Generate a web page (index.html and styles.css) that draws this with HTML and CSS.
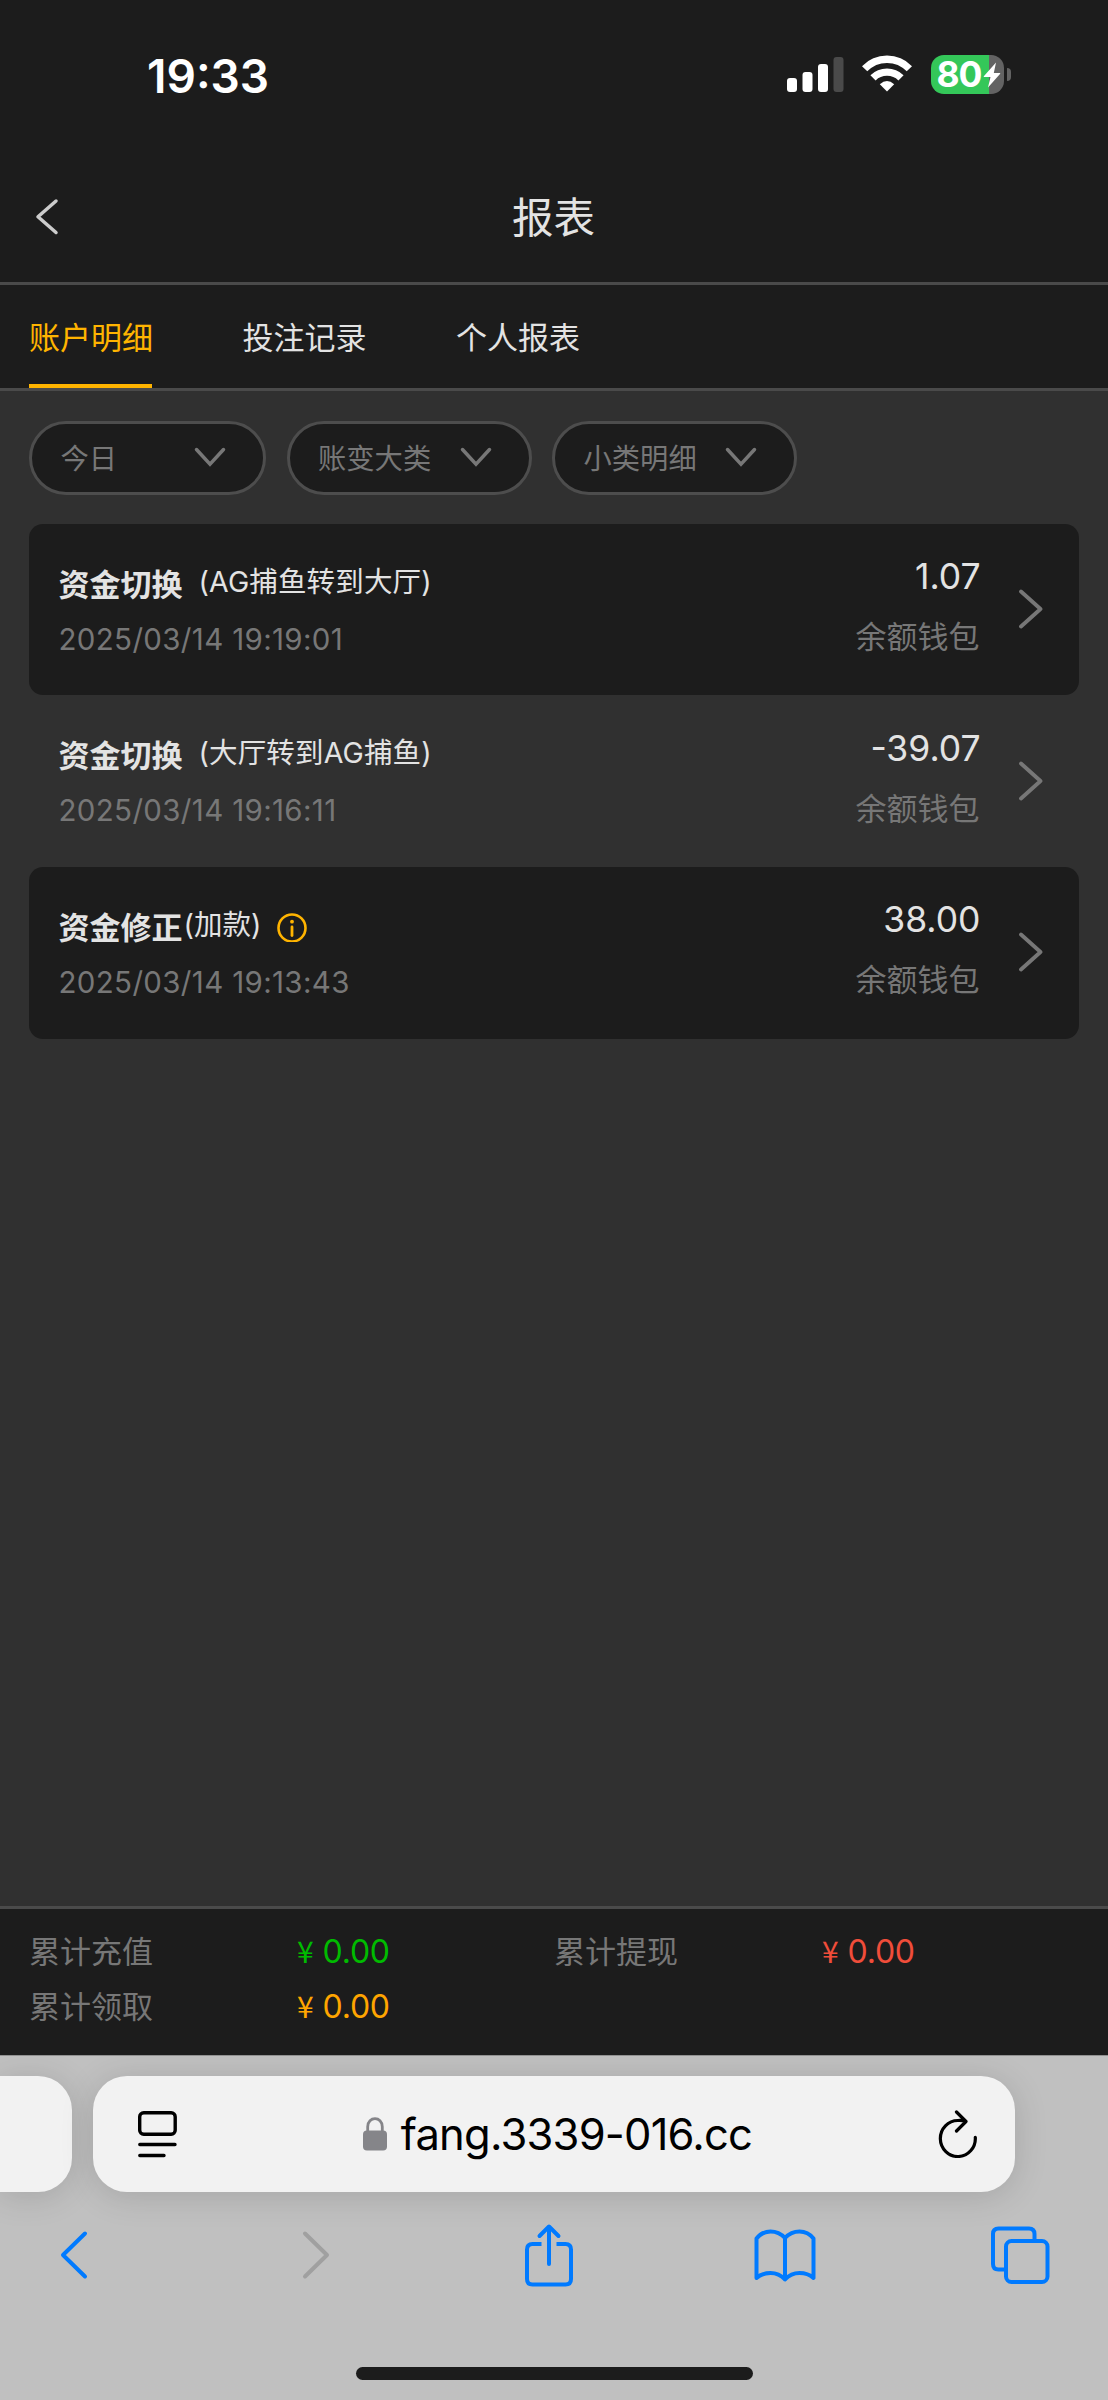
FILE: index.html
```html
<!DOCTYPE html>
<html lang="zh-CN">
<head>
<meta charset="utf-8">
<title>报表</title>
<link rel="stylesheet" href="styles.css">
</head>
<body>
<div class="status">
  <span class="time">19:33</span>
  <div class="status-icons">
    <svg class="signal" width="57" height="36" viewBox="0 0 57 36" fill="#fff"><rect x="0" y="22" width="10" height="14" rx="3"/><rect x="15.5" y="16" width="10" height="20" rx="3"/><rect x="31" y="8" width="10" height="28" rx="3"/><rect x="46.500" y="1" width="10" height="35" rx="3" fill="#4a4a4a"/></svg>
    <svg class="wifi" width="50" height="37" viewBox="0 0 50 37"><g fill="none" stroke="#fff" stroke-width="7.400"><path d="M2.600 13.800A31 31 0 0 1 47.400 13.800"/><path d="M11 22.800A20 20 0 0 1 39 22.800"/></g><path d="M25 36.500L17.800 29.300Q25 22.600 32.200 29.300Z" fill="#fff"/></svg>
    <div class="battery"><span>80</span><svg width="18" height="26" viewBox="0 0 18 26"><path d="M13 .5L.8 14.200Q.3 15 1.200 15H7.500L5 25.500L17.200 11.800Q17.600 11 16.700 11H10.800Z" fill="#fff"/></svg></div>
    <i class="nub"></i>
  </div>
</div>
<header class="header">
  <svg class="back" width="24" height="38" viewBox="0 0 24 38"><path d="M21 3L3 18.800L21 34.500" fill="none" stroke="#ccc" stroke-width="3.500" stroke-linecap="round" stroke-linejoin="round"/></svg>
  <h1>报表</h1>
</header>
<nav class="tabs"><a class="active">账户明细</a><a>投注记录</a><a>个人报表</a></nav>
<main class="content">
  <div class="filters">
    <button class="filter filter-day"><span>今日</span><svg width="32" height="20" viewBox="0 0 32 20"><path d="M2.500 2.500L16 17.200L29.500 2.500"/></svg></button>
    <button class="filter"><span>账变大类</span><svg width="32" height="20" viewBox="0 0 32 20"><path d="M2.500 2.500L16 17.200L29.500 2.500"/></svg></button>
    <button class="filter"><span>小类明细</span><svg width="32" height="20" viewBox="0 0 32 20"><path d="M2.500 2.500L16 17.200L29.500 2.500"/></svg></button>
  </div>
  <section class="records">
    <article class="record">
      <div class="info"><div class="title"><b>资金切换</b><span class="note spaced">(AG捕鱼转到大厅)</span></div><time>2025/03/14 19:19:01</time></div>
      <div class="money"><strong>1.07</strong><span>余额钱包</span></div>
      <svg class="go" width="26" height="40" viewBox="0 0 26 40"><path d="M3 2.500L22.500 20L3 37.500"/></svg>
    </article>
    <article class="record">
      <div class="info"><div class="title"><b>资金切换</b><span class="note spaced">(大厅转到AG捕鱼)</span></div><time>2025/03/14 19:16:11</time></div>
      <div class="money"><strong>-39.07</strong><span>余额钱包</span></div>
      <svg class="go" width="26" height="40" viewBox="0 0 26 40"><path d="M3 2.500L22.500 20L3 37.500"/></svg>
    </article>
    <article class="record">
      <div class="info"><div class="title"><b>资金修正</b><span class="note">(加款)</span><svg class="tip" width="30" height="29" viewBox="0 0 30 29"><circle cx="15" cy="15" r="13.500" fill="none" stroke="#ffb400" stroke-width="2.600"/><circle cx="15" cy="8.700" r="1.900" fill="#ffb400"/><path d="M15 14V22.500" stroke="#ffb400" stroke-width="2.800" stroke-linecap="round"/></svg></div><time>2025/03/14 19:13:43</time></div>
      <div class="money"><strong>38.00</strong><span>余额钱包</span></div>
      <svg class="go" width="26" height="40" viewBox="0 0 26 40"><path d="M3 2.500L22.500 20L3 37.500"/></svg>
    </article>
  </section>
</main>
<footer class="totals">
  <span>累计充值</span><em class="green"><i>¥</i>0.00</em><span>累计提现</span><em class="red"><i>¥</i>0.00</em>
  <span>累计领取</span><em class="orange"><i>¥</i>0.00</em>
</footer>
<div class="browser">
  <div class="addresses">
    <div class="previous"></div>
    <div class="address">
      <svg width="39" height="47" viewBox="0 0 39 47" fill="none" stroke="#000" stroke-width="3.400" stroke-linecap="round"><rect x="1.700" y="1.700" width="35.500" height="21.500" rx="4"/><path d="M1.800 33.500H37M1.800 44.500H26"/></svg>
      <div class="url"><svg width="24" height="34" viewBox="0 0 24 34"><rect y="13.500" width="24" height="20" rx="4" fill="#858589"/><path d="M4.700 15V9.800C4.700 -1 19.300 -1 19.300 9.800V15" fill="none" stroke="#858589" stroke-width="2.800"/></svg><span>fang.3339-016.cc</span></div>
      <svg width="40" height="48" viewBox="0 0 40 48" fill="none" stroke="#000" stroke-width="3.200" stroke-linecap="round" stroke-linejoin="round"><path d="M37.300 27.300A17.500 18 0 1 1 20 10.500Q24 10.300 27.700 11.200M18.500 2L28 11.500L18.500 21"/></svg>
    </div>
  </div>
  <div class="toolbar">
    <svg width="28" height="50" viewBox="0 0 28 50"><path d="M25 3.500L3 25L25 46.500" stroke-width="4"/></svg>
    <svg class="disabled" width="28" height="50" viewBox="0 0 28 50"><path d="M3 3.500L25 25L3 46.500" stroke-width="4"/></svg>
    <svg width="50" height="64" viewBox="0 0 50 64"><path d="M17.500 21H8.500Q3 21 3 26.500V56Q3 61.500 8.500 61.500H41.500Q47 61.500 47 56V26.500Q47 21 41.500 21H32.500" stroke-linecap="butt"/><path d="M25 41V4M15.500 13L25 3.500L34.500 13"/></svg>
    <svg width="64" height="54" viewBox="0 0 64 54"><path d="M32 10Q26 3.500 17.500 3.500T3.500 10.500V50Q9 45 17.500 45T32 51.500Q38 45 46.500 45T60.500 50V10.500Q55 3.500 46.500 3.500T32 10V51.500"/></svg>
    <svg width="60" height="60" viewBox="0 0 60 60"><path d="M44.500 14.500V9Q44.500 3.500 39 3.500H8.500Q3 3.500 3 9V39Q3 44.500 8.500 44.500H15"/><rect x="16" y="16" width="41.500" height="41" rx="5.500"/></svg>
  </div>
  <div class="home"></div>
</div>
</body>
</html>
```
FILE: styles.css
```css
* { box-sizing: border-box; }
body {
  margin: 0;
  width: 1108px;
  height: 2400px;
  overflow: hidden;
  display: flex;
  flex-direction: column;
  background: #303030;
  color: #e3e3e3;
  font-family: Inter, "Noto Sans CJK SC", sans-serif;
}
svg { display: block; flex: none; }
.status, .header, .tabs { background: #1c1c1c; }
.status {
  height: 150px;
  padding: 0 97px 0 147px;
  display: flex;
  justify-content: space-between;
}
.time {
  margin-top: 45.5px;
  line-height: 60px;
  font-size: 46px;
  font-weight: 600;
  color: #fff;
}
.status-icons { display: flex; padding-top: 55px; }
.signal { margin-top: 1px; margin-right: 18.5px; }
.wifi { margin-right: 19px; }
.battery {
  width: 73px;
  height: 39px;
  border-radius: 13px;
  background: linear-gradient(90deg, #34c759 58.5px, #636363 58.5px);
  display: flex;
  align-items: center;
  padding-left: 5.5px;
  color: #fff;
}
.battery span { width: 46.5px; font-size: 35.5px; font-weight: 700; letter-spacing: -1.2px; line-height: 39px; }
.nub { width: 4px; height: 13px; margin: 13px 0 0 3px; border-radius: 0 4px 4px 0; background: #636363; }
.header {
  height: 135px;
  border-bottom: 3px solid #4a4a4a;
  display: grid;
  grid-template-columns: 58px 1fr 58px;
}
.back { margin: 48px 0 0 35px; }
h1 { margin: 40px 0 0 -1px; line-height: 56px; font-size: 41.5px; font-weight: 400; text-align: center; }
.tabs {
  height: 106px;
  border-bottom: 3px solid #4a4a4a;
  padding-left: 29px;
  display: flex;
  gap: 90.5px;
}
.tabs a { width: 123px; white-space: nowrap; font-size: 31px; line-height: 105px; height: 103px; }
.tabs .active { color: #ffb400; background: linear-gradient(#ffb400, #ffb400) 0 100% / 100% 4.5px no-repeat; }
.content { flex: 1; padding: 30px 29px 0; }
.filters { display: flex; gap: 20.5px; }
.filter {
  width: 245px;
  height: 74px;
  border: 3px solid #4d4d4d;
  border-radius: 37px;
  background: #1c1c1c;
  padding: 0 37px 0 28.5px;
  display: flex;
  align-items: center;
  justify-content: space-between;
  color: #777;
  font-family: inherit;
  font-size: 28.3px;
}
.filter-day { width: 237px; }
.filter span { margin-bottom: 3px; }
.filter svg { margin-bottom: 3px; fill: none; stroke: #777; stroke-width: 3.5; stroke-linecap: round; }
.records { margin-top: 28.5px; }
.record { height: 171.7px; border-radius: 14px; display: flex; padding: 0 35px 0 29.5px; }
.record:nth-child(odd) { background: #1c1c1c; }
.info { flex: 1; padding-top: 39px; }
.title { display: flex; height: 44px; }
.title b { font-size: 31px; line-height: 44px; width: 124px; white-space: nowrap; }
.note { font-size: 28.5px; line-height: 38px; margin-left: 1px; }
.spaced { margin-left: 16px; letter-spacing: .15px; }
.tip { margin: 7px 0 0 16px; }
time { display: block; margin-top: 14px; line-height: 36px; font-size: 29.5px; letter-spacing: .34px; color: #777; }
.money { display: flex; flex-direction: column; align-items: flex-end; padding-top: 31.5px; }
.money strong { font-size: 35.5px; line-height: 44px; font-weight: 400; }
.money span { margin: 20px 1px 0 0; line-height: 36px; font-size: 31px; color: #777; }
.go { margin: 65.5px 0 0 37.5px; fill: none; stroke: #777; stroke-width: 3.8; stroke-linecap: round; stroke-linejoin: round; }
.totals {
  height: 149px;
  border-top: 3px solid #4a4a4a;
  background: #1c1c1c;
  padding: 15px 29px 0;
  display: grid;
  grid-template-columns: 268px 257px 268px 257px;
  grid-auto-rows: 55px;
  line-height: 55px;
  font-size: 31px;
  color: #777;
}
.totals em { font-style: normal; font-size: 32px; letter-spacing: -.2px; }
.totals em i { display: inline-block; width: 25.5px; font: 400 30px/1 "Noto Sans CJK SC", sans-serif; }
.green { color: #0b0; }
.red { color: #f04d3a; }
.orange { color: #ffa500; }
.browser { height: 345px; background: #c0c0c0; border-top: 1px solid #909090; overflow: hidden; }
.addresses { display: flex; gap: 21px; padding-top: 20px; }
.previous { width: 72px; height: 116px; border-radius: 0 34px 34px 0; background: #f2f2f2; box-shadow: 0 4px 34px rgba(0, 0, 0, .14); }
.address {
  width: 922px;
  height: 116px;
  border-radius: 34px;
  background: #f2f2f2;
  box-shadow: 0 4px 34px rgba(0, 0, 0, .14);
  display: flex;
  align-items: center;
  justify-content: space-between;
  padding: 0 37px 0 45px;
}
.url { display: flex; align-items: center; gap: 14px; color: #000; font-size: 43.5px; letter-spacing: -.8px; line-height: 60px; }
.toolbar {
  height: 64px;
  margin-top: 31px;
  padding-left: 60px;
  display: grid;
  grid-template-columns: 242px 222px 229px 237px 60px;
  align-items: center;
}
.toolbar svg { fill: none; stroke: #007aff; stroke-width: 4; stroke-linecap: round; stroke-linejoin: round; }
.toolbar .disabled { stroke: #a0a0a0; }
.home { width: 397px; height: 13px; border-radius: 7px; background: #1c1c1c; margin: 80px auto 0; }
```
